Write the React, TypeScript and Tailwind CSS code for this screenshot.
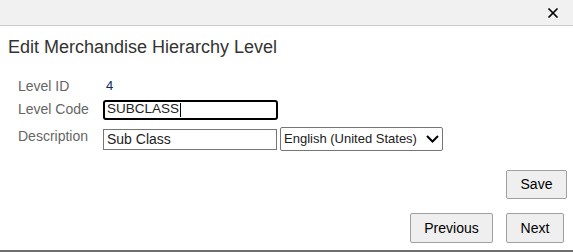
import { X } from "lucide-react";

const font = "font-['Liberation_Sans',Arial,sans-serif]";

export default function App() {
  return (
    <div className={`flex h-[252px] w-[573px] flex-col bg-white ${font}`}>
      <div className="flex h-[26px] items-center justify-end border-b border-[#cccccc] bg-[#f1f1f1] pr-[12px]">
        <X size={16} strokeWidth={2.6} className="text-black" />
      </div>

      <h1 className="mt-[10px] pl-[8px] text-[18px] leading-[22px] text-[#333333]">
        Edit Merchandise Hierarchy Level
      </h1>

      <div className="mt-[19px] flex flex-col pl-[18px] text-[14px] text-[#666666]">
        <div className="flex h-[18px] items-center">
          <span className="w-[87px]">Level ID</span>
          <span className="pl-[1px] text-[13px] text-[#0a2a5a]">4</span>
        </div>
        <div className="mt-[4px] flex items-center">
          <span className="w-[85px]">Level Code</span>
          <div className="flex h-[20px] w-[175px] items-center rounded-[3px] border-2 border-black pl-[2px] text-[13.5px] text-[#222]">
            SUBCLASS<span className="ml-px h-[14px] w-px bg-black" />
          </div>
        </div>
        <div className="mt-[7px] flex items-center">
          <span className="w-[85px] -translate-y-[3px]">Description</span>
          <div className="flex h-[21px] w-[174px] items-center border border-[#767676] pl-[3px] text-[14px] text-[#222]">
            Sub Class
          </div>
          <div className="ml-[3px] flex h-[24px] w-[163px] items-center rounded-[2px] border border-[#767676] pl-[3px] pr-[3px] text-[13px] text-[#222]">
            <span className="min-w-0 flex-1 truncate">English (United States)</span>
            <svg width="13" height="8" viewBox="0 0 13 8" className="shrink-0">
              <polyline points="1,1 6.5,6.5 12,1" fill="none" stroke="black" strokeWidth="2" />
            </svg>
          </div>
        </div>
      </div>

      <div className="mt-[19px] flex justify-end pr-[6px]">
        <button className="h-[29px] w-[61px] rounded-[2px] border border-[#a0a0a0] bg-[#efefef] text-[14px] text-black">
          Save
        </button>
      </div>

      <div className="mt-[14px] flex justify-end gap-[13px] pr-[9px]">
        <button className="h-[30px] w-[83px] rounded-[2px] border border-[#a0a0a0] bg-[#efefef] text-[14px] text-black">
          Previous
        </button>
        <button className="h-[30px] w-[58px] rounded-[2px] border border-[#a0a0a0] bg-[#efefef] text-[14px] text-black">
          Next
        </button>
      </div>

      <div className="mt-auto h-[2px] bg-[#6e6e6e]" />
    </div>
  );
}
